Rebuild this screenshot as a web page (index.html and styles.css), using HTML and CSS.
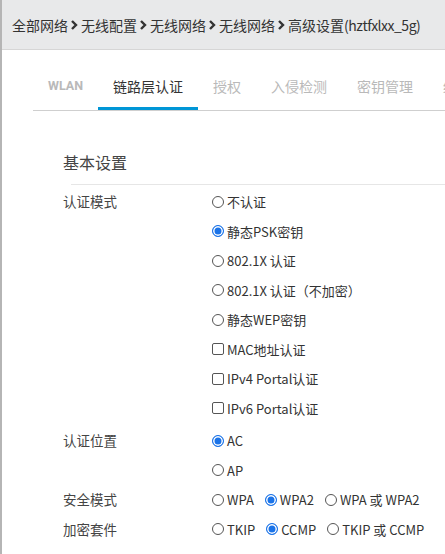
FILE: index.html
```html
<!DOCTYPE html>
<html lang="zh-CN">
<head>
<meta charset="utf-8">
<title>高级设置</title>
<link rel="stylesheet" href="styles.css">
</head>
<body>
<div class="page">
  <div class="crumb">
    <span>全部网络</span><svg class="chev" viewBox="0 0 8 10" width="8" height="10"><path d="M2 1 L6 5 L2 9" fill="none" stroke="#333" stroke-width="2.4"/></svg><span>无线配置</span><svg class="chev" viewBox="0 0 8 10" width="8" height="10"><path d="M2 1 L6 5 L2 9" fill="none" stroke="#333" stroke-width="2.4"/></svg><span>无线网络</span><svg class="chev" viewBox="0 0 8 10" width="8" height="10"><path d="M2 1 L6 5 L2 9" fill="none" stroke="#333" stroke-width="2.4"/></svg><span>无线网络</span><svg class="chev" viewBox="0 0 8 10" width="8" height="10"><path d="M2 1 L6 5 L2 9" fill="none" stroke="#333" stroke-width="2.4"/></svg><span>高级设置<span class="latin">(hztfxlxx_5g)</span></span>
  </div>

  <div class="tabs">
    <div class="tab tab-bold">WLAN</div>
    <div class="tab active">链路层认证</div>
    <div class="tab">授权</div>
    <div class="tab">入侵检测</div>
    <div class="tab">密钥管理</div>
    <div class="tab">终端</div>
  </div>

  <div class="section">
    <div class="section-title">基本设置</div>
    <div class="divider"></div>

    <div class="field group-first">
      <div class="label">认证模式</div>
      <div class="opts">
        <div class="opt"><span class="radio"></span>不认证</div>
        <div class="opt"><span class="radio on"></span>静态PSK密钥</div>
        <div class="opt"><span class="radio"></span>802.1X 认证</div>
        <div class="opt"><span class="radio"></span>802.1X 认证（不加密）</div>
        <div class="opt"><span class="radio"></span>静态WEP密钥</div>
        <div class="opt"><span class="check"></span>MAC地址认证</div>
        <div class="opt"><span class="check"></span>IPv4 Portal认证</div>
        <div class="opt"><span class="check"></span>IPv6 Portal认证</div>
      </div>
    </div>

    <div class="field">
      <div class="label">认证位置</div>
      <div class="opts">
        <div class="opt"><span class="radio on"></span>AC</div>
        <div class="opt"><span class="radio"></span>AP</div>
      </div>
    </div>

    <div class="field">
      <div class="label">安全模式</div>
      <div class="opts">
        <div class="opt inline">
          <span class="item"><span class="radio"></span>WPA</span>
          <span class="item"><span class="radio on"></span>WPA2</span>
          <span class="item"><span class="radio"></span>WPA 或 WPA2</span>
        </div>
      </div>
    </div>

    <div class="field">
      <div class="label">加密套件</div>
      <div class="opts">
        <div class="opt inline">
          <span class="item"><span class="radio"></span>TKIP</span>
          <span class="item"><span class="radio on"></span>CCMP</span>
          <span class="item"><span class="radio"></span>TKIP 或 CCMP</span>
        </div>
      </div>
    </div>
  </div>
</div>
</body>
</html>
```

FILE: styles.css
```css
html, body {
  margin: 0;
  padding: 0;
  background: #fff;
}

body {
  font-family: "Noto Sans CJK SC", "Noto Sans", sans-serif;
  color: #333;
  overflow: hidden;
}

.page {
  border-left: 2px solid #b5b5b5;
  height: 554px;
  box-sizing: border-box;
}

.crumb {
  height: 49px;
  background: #e8e9ea;
  border-bottom: 1px solid #d6d6d6;
  display: flex;
  align-items: center;
  padding-left: 10px;
  font-size: 14px;
  color: #333;
  white-space: nowrap;
}

.latin {
  letter-spacing: -0.5px;
}

.chev {
  margin: 0 3px 0 2px;
  flex: none;
}

.tabs {
  display: flex;
  margin-left: 31px;
  border-bottom: 1px solid #cfcfcf;
  white-space: nowrap;
  overflow: hidden;
}

.tab {
  padding: 26px 15px 11px;
  line-height: 20px;
  font-size: 14px;
  color: #b9b9b9;
  border-bottom: 4px solid transparent;
  margin-bottom: -1px;
  flex: none;
}

.tab-bold {
  font-weight: 700;
  font-family: Roboto, "Noto Sans", sans-serif;
  font-size: 12.5px;
}

.tab.active {
  color: #333;
  border-bottom-color: #0096d6;
}

.section {
  padding-left: 61px;
}

.section-title {
  margin-top: 40px;
  font-size: 16px;
  line-height: 22px;
  color: #444;
}

.divider {
  margin: 11px 0 0 8px;
  border-top: 1px solid #e6e6e6;
  margin-right: -10px;
}

.field {
  display: flex;
}

.group-first {
  padding-top: 2px;
  margin-bottom: 3px;
}

.label {
  width: 149px;
  flex: none;
  height: 29.5px;
  line-height: 29.5px;
  font-size: 13.5px;
  color: #444;
}

.opts {
  display: flex;
  flex-direction: column;
}

.opt {
  height: 29.5px;
  display: flex;
  align-items: center;
  font-size: 13px;
  color: #333;
  white-space: nowrap;
}

.inline {
  gap: 11px;
}

.item {
  display: flex;
  align-items: center;
}

.radio {
  width: 12px;
  height: 12px;
  box-sizing: border-box;
  border: 1px solid #555;
  border-radius: 50%;
  margin-right: 3px;
  flex: none;
}

.radio.on {
  border: 1.5px solid #1a73e8;
  background: #1a73e8;
  box-shadow: inset 0 0 0 1.5px #fff;
}

.check {
  width: 12px;
  height: 12px;
  box-sizing: border-box;
  border: 1px solid #555;
  border-radius: 2px;
  margin-right: 3px;
  flex: none;
}
```
